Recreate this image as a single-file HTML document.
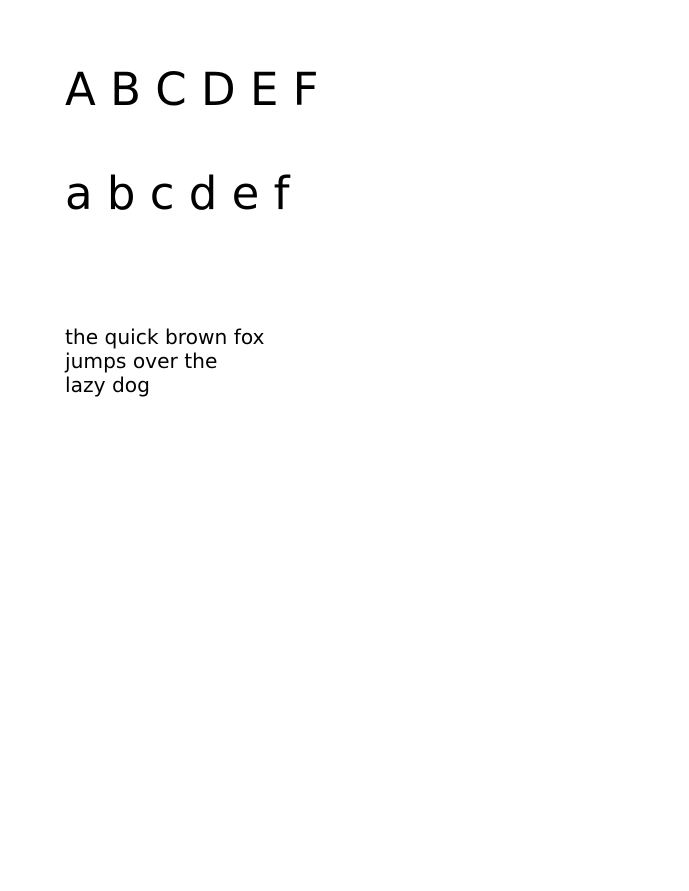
<!DOCTYPE html>
<html><head><meta charset="utf-8"><style>
html,body{margin:0;padding:0;background:#fff;width:689px;height:891px;overflow:hidden}
div{position:absolute;left:65px;font-family:"DejaVu Sans","Liberation Sans",sans-serif;color:#000;white-space:pre}
.big{font-size:45px;line-height:45px}
.sm{font-size:20.2px;line-height:24px}
</style></head><body>
<div class="big" style="top:67px">A B C D E F</div>
<div class="big" style="top:171px">a b c d e f</div>
<div class="sm" style="top:325px">the quick brown fox
jumps over the
lazy dog</div>
</body></html>
